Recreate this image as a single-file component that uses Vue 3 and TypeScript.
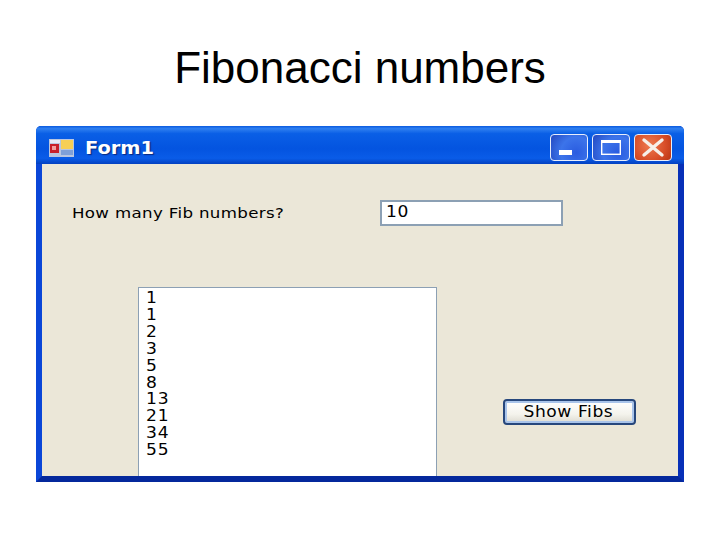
<script setup lang="ts">
const fibs: number[] = [1, 1, 2, 3, 5, 8, 13, 21, 34, 55]
</script>

<template>
  <main class="slide">
    <h1 class="heading">Fibonacci numbers</h1>
    <section class="window">
      <header class="titlebar">
        <svg class="app-icon" width="25" height="18" viewBox="0 0 25 18">
          <rect x="0" y="0" width="25" height="18" fill="#b9c6e0" />
          <rect x="1" y="1" width="10" height="3" fill="#e6ecf8" />
          <rect x="1" y="5" width="9" height="9" fill="#c8202a" />
          <rect x="3" y="7" width="4" height="4" fill="#f2a0a0" />
          <rect x="12" y="1" width="12" height="9" fill="#f7cf56" />
          <rect x="12" y="11" width="12" height="5" fill="#7fa0d8" />
        </svg>
        <span class="title wide">Form1</span>
        <div class="controls">
          <div class="ctl ctl-blue">
            <svg width="36" height="25" viewBox="0 0 36 25"><rect x="8" y="15" width="13" height="5" fill="#fff" /></svg>
          </div>
          <div class="ctl ctl-blue">
            <svg width="36" height="25" viewBox="0 0 36 25"><rect x="8.7" y="5.7" width="18.6" height="13.6" fill="none" stroke="#fff" stroke-width="1.4" /><rect x="8" y="5" width="20" height="3" fill="#fff" /></svg>
          </div>
          <div class="ctl ctl-red">
            <svg width="36" height="25" viewBox="0 0 36 25"><path d="M9 5 L27 20 M27 5 L9 20" stroke="#f6efe8" stroke-width="3.4" stroke-linecap="round" /></svg>
          </div>
        </div>
      </header>
      <div class="client">
        <div class="row-top">
          <label class="prompt"><span class="wide">How many Fib numbers?</span></label>
          <div class="field"><span class="wide">10</span></div>
        </div>
        <div class="row-bottom">
          <ul class="list">
            <li v-for="(n, i) in fibs" :key="i" class="wide">{{ n }}</li>
          </ul>
          <button class="btn" type="button"><span class="wide wide-center">Show Fibs</span></button>
        </div>
      </div>
    </section>
  </main>
</template>

<style scoped>
.slide {
  width: 720px;
  height: 540px;
  background: #fff;
  display: flex;
  flex-direction: column;
  align-items: center;
  overflow: hidden;
  font-family: "Liberation Sans", Arial, sans-serif;
}
.heading {
  margin: 0;
  height: 126px;
  padding-top: 43px;
  box-sizing: border-box;
  font-size: 44px;
  line-height: 50px;
  font-weight: 400;
  color: #000;
}
.window {
  width: 648px;
  height: 356px;
  box-sizing: border-box;
  display: flex;
  flex-direction: column;
  background: #0a3ad0;
  border-radius: 5px 5px 0 0;
  border-right: 6px solid #0730b8;
  border-left: 6px solid #0a46d8;
  border-bottom: 6px solid #04289c;
}
.titlebar {
  height: 38px;
  margin: 0 -6px;
  padding: 5px 12px 0 13px;
  box-sizing: border-box;
  flex: none;
  display: flex;
  align-items: center;
  border-radius: 5px 5px 0 0;
  background: linear-gradient(180deg, #0a5ae0 0%, #2f80f0 7%, #0a5fe6 20%, #0454e0 60%, #0a5ce8 85%, #0240c0 100%);
}
.app-icon {
  flex: none;
}
.wide {
  display: inline-block;
  transform: scaleX(1.14);
  transform-origin: left center;
  white-space: nowrap;
}
.wide-center {
  transform-origin: center;
}
.title {
  margin-left: 11px;
  font-family: "DejaVu Sans", sans-serif;
  font-size: 17px;
  font-weight: 700;
  color: #fff;
  text-shadow: 1px 1px 1px #0a2a80;
}
.controls {
  margin-left: auto;
  display: flex;
  gap: 4px;
}
.ctl {
  width: 38px;
  height: 27px;
  box-sizing: border-box;
  border: 1.5px solid #e8eefc;
  border-radius: 4px;
  display: flex;
  align-items: center;
  justify-content: center;
}
.ctl svg { display: block; flex: none; }
.ctl-blue {
  background: radial-gradient(circle at 70% 70%, #2a5ce0 0%, #3c74ea 50%, #2348c0 100%);
}
.ctl-red {
  background: radial-gradient(circle at 40% 40%, #ee7a50 0%, #d84e28 60%, #b83414 100%);
}
.client {
  flex: 1;
  min-height: 0;
  overflow: hidden;
  background: #ebe7d8;
  padding: 36px 42px 0 30px;
  color: #000;
  font-family: "DejaVu Sans", sans-serif;
}
.row-top {
  display: flex;
  align-items: center;
  height: 26px;
}
.prompt {
  width: 308px;
  flex: none;
  font-size: 14.6px;
  letter-spacing: 0.3px;
  line-height: 26px;
  white-space: nowrap;
}
.field {
  width: 183px;
  height: 26px;
  box-sizing: border-box;
  background: #fff;
  border: 2px solid #8ca0b4;
  padding-left: 4px;
  font-size: 15px;
  letter-spacing: 0.5px;
  line-height: 21px;
}
.row-bottom {
  display: flex;
  align-items: flex-start;
  margin-top: 61px;
  margin-left: 66px;
}
.list {
  list-style: none;
  margin: 0;
  padding: 2px 0 0 7px;
  width: 299px;
  height: 200px;
  box-sizing: border-box;
  flex: none;
  background: #fff;
  border: 1.5px solid #8ca0b4;
  font-size: 15px;
  letter-spacing: 0.8px;
  line-height: 16.9px;
}
.list li {
  display: block;
}
.btn {
  margin: 112px 0 0 66px;
  width: 133px;
  height: 26px;
  box-sizing: border-box;
  flex: none;
  padding: 0 2px 0 0;
  border: 2px solid #26477c;
  border-radius: 4px;
  background: linear-gradient(180deg, #fff 0%, #f4f3ec 60%, #dcdad0 100%);
  box-shadow: inset 0 0 0 2px #a9c4ea;
  font-family: "DejaVu Sans", sans-serif;
  font-size: 15px;
  letter-spacing: 0.5px;
  color: #000;
}
</style>
